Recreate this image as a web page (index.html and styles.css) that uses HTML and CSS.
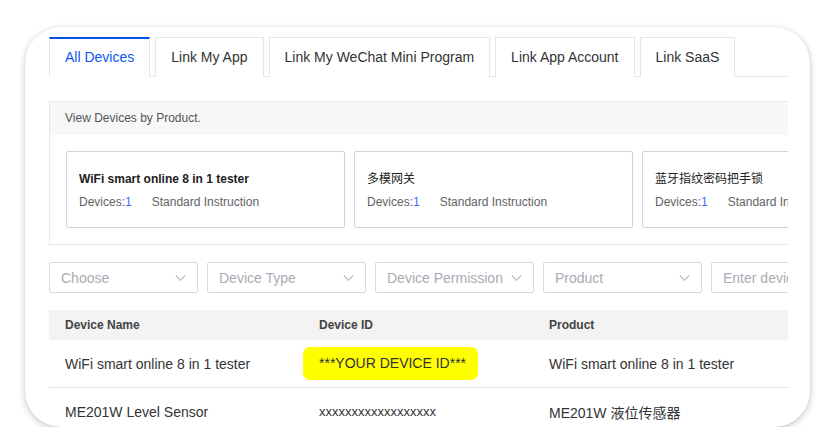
FILE: index.html
```html
<!DOCTYPE html>
<html lang="en">
<head>
<meta charset="utf-8">
<title>Devices</title>
<link rel="stylesheet" href="styles.css">
</head>
<body>
<div class="card">
  <div class="inner">
    <div class="tabs">
      <div class="tab active">All Devices</div>
      <div class="tab">Link My App</div>
      <div class="tab">Link My WeChat Mini Program</div>
      <div class="tab">Link App Account</div>
      <div class="tab">Link SaaS</div>
    </div>

    <div class="panel">
      <div class="panel-head">View Devices by Product.</div>
      <div class="panel-body">
        <div class="pcard">
          <div class="ptitle">WiFi smart online 8 in 1 tester</div>
          <div class="pmeta"><span>Devices:<b class="num">1</b></span><span>Standard Instruction</span></div>
        </div>
        <div class="pcard">
          <div class="ptitle cjk">多模网关</div>
          <div class="pmeta"><span>Devices:<b class="num">1</b></span><span>Standard Instruction</span></div>
        </div>
        <div class="pcard">
          <div class="ptitle cjk">蓝牙指纹密码把手锁</div>
          <div class="pmeta"><span>Devices:<b class="num">1</b></span><span>Standard Instruction</span></div>
        </div>
      </div>
    </div>

    <div class="filters">
      <div class="select first"><span>Choose</span><svg class="chev" viewBox="0 0 12 8"><path d="M1 1.5 L6 6.5 L11 1.5"/></svg></div>
      <div class="select"><span>Device Type</span><svg class="chev" viewBox="0 0 12 8"><path d="M1 1.5 L6 6.5 L11 1.5"/></svg></div>
      <div class="select"><span>Device Permission</span><svg class="chev" viewBox="0 0 12 8"><path d="M1 1.5 L6 6.5 L11 1.5"/></svg></div>
      <div class="select"><span>Product</span><svg class="chev" viewBox="0 0 12 8"><path d="M1 1.5 L6 6.5 L11 1.5"/></svg></div>
      <div class="select input"><span>Enter device name</span></div>
    </div>

    <div class="table">
      <div class="trow thead">
        <div class="c1">Device Name</div>
        <div class="c2">Device ID</div>
        <div class="c3">Product</div>
      </div>
      <div class="trow">
        <div class="c1">WiFi smart online 8 in 1 tester</div>
        <div class="c2"><span class="hl">***YOUR DEVICE ID***</span></div>
        <div class="c3">WiFi smart online 8 in 1 tester</div>
      </div>
      <div class="trow">
        <div class="c1">ME201W Level Sensor</div>
        <div class="c2 xid">xxxxxxxxxxxxxxxxxx</div>
        <div class="c3">ME201W 液位传感器</div>
      </div>
    </div>
  </div>
</div>
</body>
</html>
```
FILE: styles.css
```css
* { box-sizing: border-box; }
html, body { margin: 0; padding: 0; background: #fff; }
body {
  font-family: "Liberation Sans", "Noto Sans CJK SC", sans-serif;
  color: #333;
  font-size: 14px;
}
.card {
  margin: 27px 0 0 25px;
  width: 785px;
  height: 400px;
  border-radius: 36px;
  background: #fff;
  box-shadow: 0 2px 7px rgba(0,0,0,0.22), 0 0 2px rgba(0,0,0,0.08);
  overflow: hidden;
  padding: 10px 22px 0 24px;
}
.inner { width: 739px; overflow: hidden; }

.tabs {
  display: flex;
  gap: 5px;
  border-bottom: 1px solid #e7e7e7;
  height: 40px;
}
.tab {
  height: 40px;
  padding: 0 15px;
  line-height: 38px;
  border: 1px solid #e7e7e7;
  border-bottom: none;
  color: #333;
  white-space: nowrap;
  background: #fff;
}
.tab.active {
  border-top: 2px solid #0052e0;
  color: #0b57f0;
  line-height: 37px;
  height: 40px;
  margin-bottom: -1px;
}

.panel {
  margin-top: 24px;
  border: 1px solid #e8e8e8;
  width: 760px;
}
.panel-head {
  height: 33px;
  line-height: 32px;
  background: #f7f7f7;
  padding-left: 15px;
  font-size: 12px;
  color: #555;
}
.panel-body {
  display: flex;
  gap: 9px;
  padding: 16px;
}
.pcard {
  flex: 0 0 279px;
  height: 77px;
  border: 1px solid #d4d4d4;
  border-radius: 2px;
  padding: 19px 12px 0 12px;
}
.ptitle {
  font-size: 12px;
  font-weight: 700;
  color: #222;
  line-height: 17px;
  white-space: nowrap;
}
.ptitle.cjk { font-weight: 400; }
.pmeta {
  margin-top: 6px;
  font-size: 12px;
  color: #606266;
  line-height: 17px;
  display: flex;
  gap: 20px;
  white-space: nowrap;
}
.num { font-weight: 400; color: #3d6dff; }

.filters {
  margin-top: 17px;
  display: flex;
  gap: 9px;
}
.select {
  flex: 0 0 159px;
  height: 31px;
  border: 1px solid #d9d9d9;
  border-radius: 2px;
  display: flex;
  align-items: center;
  justify-content: space-between;
  padding: 0 11px;
  color: #a8acb5;
  white-space: nowrap;
}
.select.first { flex-basis: 149px; }
.select.input { flex-basis: 200px; overflow: hidden; justify-content: flex-start; }
.chev {
  width: 11px;
  height: 8px;
  fill: none;
  stroke: #a8acb5;
  stroke-width: 1.1;
}

.table { margin-top: 17px; width: 760px; }
.trow {
  display: flex;
  align-items: center;
  height: 48px;
  border-bottom: 1px solid #e4e4e4;
  white-space: nowrap;
}
.thead {
  height: 30px;
  background: #f3f3f3;
  border-bottom: none;
  font-size: 12px;
  font-weight: 700;
  color: #444;
}
.c1 { flex: 0 0 254px; padding-left: 16px; }
.c2 { flex: 0 0 230px; padding-left: 16px; }
.c3 { flex: 1; padding-left: 16px; }
.hl {
  display: inline-block;
  background: #ffff00;
  border-radius: 7px;
  height: 33px;
  line-height: 33px;
  width: 175px;
  padding-left: 16px;
  margin-left: -16px;
  color: #333;
}
.xid { font-size: 13px; color: #333; }
```
